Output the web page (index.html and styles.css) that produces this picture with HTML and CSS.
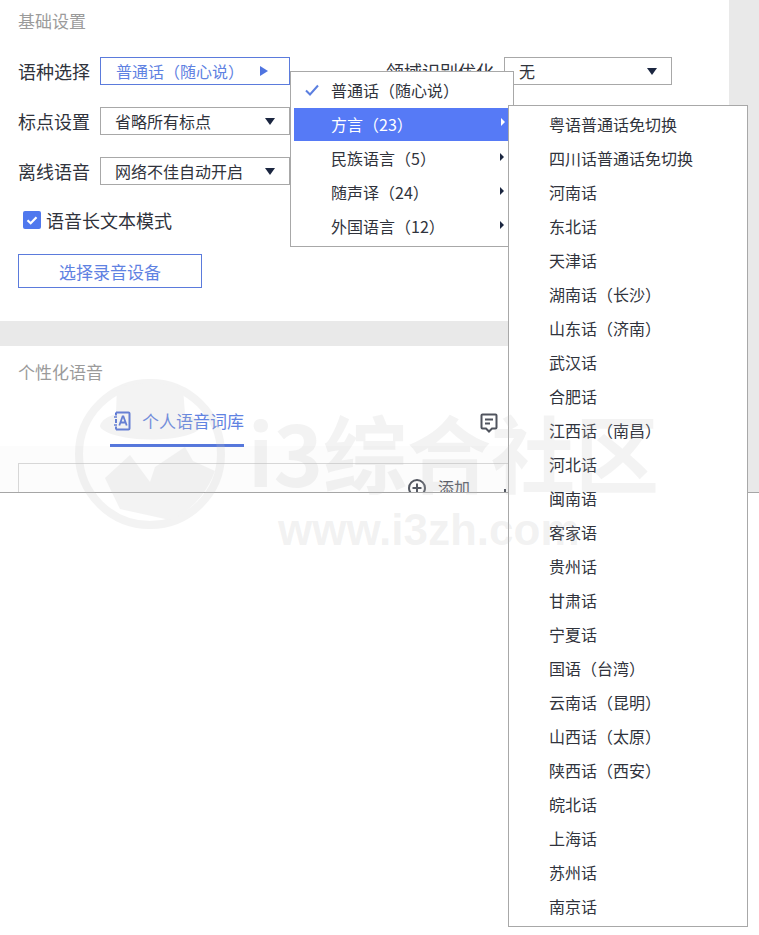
FILE: index.html
```html
<!DOCTYPE html>
<html lang="zh-CN">
<head>
<meta charset="utf-8">
<title>基础设置</title>
<link rel="stylesheet" href="styles.css">
</head>
<body>
<div class="window">
  <main class="main">
    <section class="basic">
      <h2 class="section-title">基础设置</h2>
      <div class="row">
        <span class="label">语种选择</span>
        <div class="select select-active"><span>普通话（随心说）</span><i class="tri-right"></i></div>
        <span class="label label-second">领域识别优化</span>
        <div class="select select-small"><span>无</span><i class="tri-down"></i></div>
      </div>
      <div class="row">
        <span class="label">标点设置</span>
        <div class="select"><span>省略所有标点</span><i class="tri-down"></i></div>
      </div>
      <div class="row">
        <span class="label">离线语音</span>
        <div class="select"><span>网络不佳自动开启</span><i class="tri-down"></i></div>
      </div>
      <label class="check">
        <span class="box"><svg viewBox="0 0 18 18" width="18" height="18"><path d="M4.5 9.2l3.2 3.1 5.8-6" fill="none" stroke="#fff" stroke-width="2.2"/></svg></span>
        <span>语音长文本模式</span>
      </label>
      <button class="device-btn">选择录音设备</button>
    </section>
    <div class="divider"></div>
    <section class="personal">
      <h2 class="section-title">个性化语音</h2>
      <div class="tabs">
        <div class="tab tab-active">
          <svg class="tab-icon" viewBox="0 0 18 20" width="18" height="20"><path d="M3 1.5h12.5a1 1 0 0 1 1 1v15a1 1 0 0 1-1 1H3M3 1.5v3M3 15.5v3M3 8v4" fill="none" stroke="#4f6fd8" stroke-width="2"/><path d="M1 6h3M1 14h3" stroke="#4f6fd8" stroke-width="1.5"/><path d="M6.3 14.5L9.6 5.5h.8l3.3 9M7.6 11.5h4.8" fill="none" stroke="#4f6fd8" stroke-width="1.8"/></svg>
          <span>个人语音词库</span>
        </div>
        <svg class="note-icon" viewBox="0 0 18 20" width="18" height="20"><path d="M2.5 1.5h13a1 1 0 0 1 1 1v12a1 1 0 0 1-1 1H12l-3 3-3-3H2.5a1 1 0 0 1-1-1v-12a1 1 0 0 1 1-1z" fill="none" stroke="#50545e" stroke-width="2"/><path d="M5 6.5h8M5 10.5h5" stroke="#50545e" stroke-width="2"/></svg>
      </div>
      <div class="panel">
        <div class="add">
          <svg viewBox="0 0 20 20" width="20" height="20"><circle cx="10" cy="10" r="8" fill="none" stroke="#50545e" stroke-width="2"/><path d="M5.5 10h9M10 5.5v9" stroke="#50545e" stroke-width="2"/></svg>
          <span>添加</span>
          <i class="tick"></i>
        </div>
      </div>
    </section>
  </main>
  <aside class="side"></aside>
</div>

<ul class="menu menu-main">
  <li class="item"><svg class="check-mark" viewBox="0 0 14 12" width="14" height="12"><path d="M1 6.5l4 4 8-9" fill="none" stroke="#5b7fe0" stroke-width="2"/></svg>普通话（随心说）</li>
  <li class="item item-on">方言（23）<i class="caret caret-on"></i></li>
  <li class="item">民族语言（5）<i class="caret"></i></li>
  <li class="item">随声译（24）<i class="caret"></i></li>
  <li class="item">外国语言（12）<i class="caret"></i></li>
</ul>

<ul class="menu menu-sub">
  <li class="item">粤语普通话免切换</li>
  <li class="item">四川话普通话免切换</li>
  <li class="item">河南话</li>
  <li class="item">东北话</li>
  <li class="item">天津话</li>
  <li class="item">湖南话（长沙）</li>
  <li class="item">山东话（济南）</li>
  <li class="item">武汉话</li>
  <li class="item">合肥话</li>
  <li class="item">江西话（南昌）</li>
  <li class="item">河北话</li>
  <li class="item">闽南语</li>
  <li class="item">客家语</li>
  <li class="item">贵州话</li>
  <li class="item">甘肃话</li>
  <li class="item">宁夏话</li>
  <li class="item">国语（台湾）</li>
  <li class="item">云南话（昆明）</li>
  <li class="item">山西话（太原）</li>
  <li class="item">陕西话（西安）</li>
  <li class="item">皖北话</li>
  <li class="item">上海话</li>
  <li class="item">苏州话</li>
  <li class="item">南京话</li>
</ul>

<div class="watermark">
  <div class="wm-band"></div>
  <svg class="wm-logo" viewBox="0 0 150 150" width="150" height="150">
    <circle cx="75" cy="75" r="71" fill="none" stroke="#c4c4c4" stroke-width="8"/>
    <path d="M42 8C60 3 95 3 108 10L110 35C122 38 127 43 126 48C120 58 90 62 62 60C40 58 26 52 25 47C26 41 34 37 41 35z" fill="#c4c4c4"/>
    <path d="M30 99L55 76L75 103L80 88L110 68L118 82L140 92C130 120 110 135 95 141L45 130z" fill="#c4c4c4"/>
  </svg>
  <div class="wm-title">i3综合社区</div>
  <div class="wm-url">www.i3zh.com</div>
</div>
</body>
</html>
```
FILE: styles.css
```css
* { box-sizing: border-box; }
html, body { margin: 0; padding: 0; }
body {
  width: 759px;
  height: 935px;
  position: relative;
  overflow: hidden;
  background: #fff;
  color: #30333c;
  font-family: "Noto Sans CJK SC", "Noto Sans", sans-serif;
}
ul { list-style: none; margin: 0; padding: 0; }
i { display: block; font-style: normal; }

.window {
  height: 493px;
  display: flex;
  overflow: hidden;
  border-bottom: 1px solid #a6a6a6;
}
.main { width: 729px; background: #fff; }
.side { width: 30px; background: #e9e9e9; }

.section-title {
  margin: 0;
  font-size: 17px;
  line-height: 22px;
  font-weight: 400;
  color: #9b9b9b;
}

.basic { height: 321px; padding: 10px 18px 0; }
.basic .section-title { margin-bottom: 25px; }

.row {
  display: flex;
  align-items: center;
  height: 28px;
  margin-bottom: 22px;
}
.label { width: 82px; font-size: 18px; line-height: 28px; color: #30333c; }
.label-second { width: 118px; margin-left: 96px; }

.select {
  width: 190px;
  height: 28px;
  padding: 0 14px;
  display: flex;
  align-items: center;
  justify-content: space-between;
  border: 1px solid #a8a8a8;
  font-size: 16px;
  color: #30333c;
}
.select-active { border-color: #5b7bdc; color: #5f82e2; padding-left: 15px; padding-right: 21px; }
.select-small { width: 168px; }

.tri-down {
  width: 0; height: 0;
  border-left: 5.5px solid transparent;
  border-right: 5.5px solid transparent;
  border-top: 7px solid #1b2640;
}
.tri-right {
  width: 0; height: 0;
  border-top: 5px solid transparent;
  border-bottom: 5px solid transparent;
  border-left: 8px solid #4f74e0;
}

.check {
  display: flex;
  align-items: center;
  gap: 5px;
  height: 28px;
  margin: -1px 0 0 5px;
  font-size: 18px;
  color: #30333c;
}
.box {
  width: 18px; height: 18px;
  display: block;
  background: #4f78ee;
  border-radius: 2px;
}
.box svg { display: block; }

.device-btn {
  display: block;
  width: 184px;
  height: 34px;
  margin-top: 20px;
  padding: 0;
  background: #fff;
  border: 1px solid #5b7bdc;
  border-radius: 0;
  color: #5f82e2;
  font-family: inherit;
  font-size: 17px;
}

.divider { height: 25px; background: #e9e9e9; }

.personal { padding: 15px 0 0 18px; height: 146px; }
.tabs {
  position: relative;
  height: 62px;
  margin-top: 18px;
  padding-left: 92px;
}
.tab {
  display: flex;
  align-items: center;
  width: 134px;
  height: 46px;
  padding: 0 0 4px 3px;
  gap: 11px;
  border-bottom: 3px solid #5577dc;
  font-size: 17px;
  color: #5f82e2;
  white-space: nowrap;
}
.tab-icon { display: block; flex: none; }
.note-icon { position: absolute; left: 462px; top: 12px; }

.panel {
  height: 60px;
  border-top: 1px solid #d9d9d9;
  border-left: 1px solid #d9d9d9;
}
.add {
  display: flex;
  align-items: center;
  gap: 11px;
  padding: 6px 0 0 388px;
  font-size: 16px;
  line-height: 34px;
  color: #50545e;
}
.add svg { display: block; flex: none; margin-top: 2px; }
.tick { width: 2px; height: 8px; margin: 12px 0 0 23px; background: #50545e; }

.menu {
  position: absolute;
  background: #fff;
  border: 1px solid #a8a8a8;
  padding: 2px 3px;
  font-size: 16px;
  color: #30333c;
}
.menu-main { left: 290px; top: 71px; width: 224px; height: 176px; }
.menu-sub { left: 508px; top: 105px; width: 240px; height: 822px; padding: 2px 0 0; }

.item {
  position: relative;
  height: 34px;
  line-height: 33px;
  white-space: nowrap;
}
.menu-main .item { padding-left: 37px; }
.menu-sub .item { padding-left: 40px; }
.item-on {
  width: 216px;
  color: #fff;
  background: #567af6;
  background-clip: padding-box;
  border-bottom: 1px solid transparent;
}
.check-mark { position: absolute; left: 11px; top: 10px; }
.caret {
  position: absolute;
  right: 6px;
  top: 11px;
  width: 0; height: 0;
  border-top: 4px solid transparent;
  border-bottom: 4px solid transparent;
  border-left: 4px solid #1b2640;
}
.caret-on { right: 5px; top: 10px; border-left-color: #fff; }

.watermark {
  position: absolute;
  left: 0; top: 0;
  width: 759px; height: 600px;
  pointer-events: none;
  overflow: hidden;
}
.wm-band {
  position: absolute;
  left: 0; top: 446px;
  width: 508px; height: 46px;
  background: rgba(190,190,190,.05);
}
.wm-logo { position: absolute; left: 75px; top: 379px; opacity: .2; }
.wm-title {
  position: absolute;
  left: 248px; top: 390px;
  font-size: 84px;
  line-height: 122px;
  font-weight: 700;
  color: rgba(190,190,190,.18);
  white-space: nowrap;
}
.wm-url {
  position: absolute;
  left: 278px; top: 500px;
  font-family: "Liberation Sans", sans-serif;
  font-size: 44px;
  line-height: 60px;
  font-weight: 700;
  color: rgba(190,190,190,.2);
  white-space: nowrap;
}
```
